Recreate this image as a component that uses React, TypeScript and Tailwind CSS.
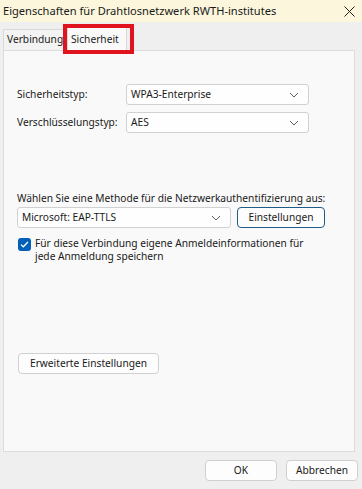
import React from 'react';

const Chevron = () => (
  <svg width="10" height="6" viewBox="0 0 10 6" className="shrink-0">
    <path d="M1 1l4 4 4-4" fill="none" stroke="#606060" strokeWidth="1" />
  </svg>
);

const Combo = ({ value, width }: { value: string; width: string }) => (
  <div
    className={`${width} h-[21px] flex items-center justify-between pl-[4px] pr-[9px] bg-[#fefefe] border border-[#d1d1d1] rounded-[3px]`}
  >
    <span>{value}</span>
    <Chevron />
  </div>
);

const Button = ({ label, className }: { label: string; className: string }) => (
  <div
    className={`${className} h-[21px] flex items-center justify-center bg-[#fdfdfd] border border-[#d0d0d0] rounded-[4px]`}
  >
    {label}
  </div>
);

export default function App() {
  return (
    <div
      className="w-[362px] h-[489px] bg-[#efefef] flex flex-col text-[10.2px] text-[#1a1a1a] overflow-hidden"
      style={{ fontFamily: '"Noto Sans", sans-serif' }}
    >
      {/* title bar */}
      <div className="h-[22px] bg-[#fbf6dc] flex items-center justify-between pl-[3px] pr-[7px] text-[11.1px]">
        <span>Eigenschaften für Drahtlosnetzwerk RWTH-institutes</span>
        <svg width="11" height="11" viewBox="0 0 11 11">
          <path d="M0.5 0.5l10 10M10.5 0.5l-10 10" stroke="#222" strokeWidth="1" />
        </svg>
      </div>

      {/* tabs */}
      <div className="h-[28px] flex items-end pl-[3px]">
        <div className="w-[64px] h-[21px] pl-[3px] flex items-center bg-[#f3f3f3] border border-b-0 border-[#d9d9d9]">
          Verbindung
        </div>
        <div className="relative w-[60px] h-[24px] mb-[-1px] pl-[3px] flex items-center bg-[#f9f9f9] border border-b-0 border-[#d9d9d9] z-10">
          Sicherheit
          <div className="absolute left-[-5px] right-[-8px] top-[-4px] bottom-[-3px] border-[4px] border-[#e0141e]" />
        </div>
      </div>

      {/* panel */}
      <div className="ml-[3px] w-[352px] h-[402px] border border-[#dcdcdc] bg-[#f9f9f9] pl-[13px] pt-[33px]">
        <div className="flex items-center">
          <span className="w-[109px]">Sicherheitstyp:</span>
          <Combo value="WPA3-Enterprise" width="w-[183px]" />
        </div>
        <div className="flex items-center mt-[7px]">
          <span className="w-[109px]">Verschlüsselungstyp:</span>
          <Combo value="AES" width="w-[183px]" />
        </div>

        <div className="mt-[57px] leading-[16px] whitespace-nowrap">
          Wählen Sie eine Methode für die Netzwerkauthentifizierung aus:
        </div>
        <div className="flex items-center gap-[6px] mt-[1px]">
          <Combo value="Microsoft: EAP-TTLS" width="w-[214px]" />
          <div className="w-[88px] h-[21px] flex items-center justify-center bg-[#fdfdfd] border border-[#1f5c86] rounded-[4px]">
            Einstellungen
          </div>
        </div>

        <div className="flex items-start mt-[9px] pl-[1px]">
          <div className="w-[13px] h-[13px] mt-[1px] mr-[4px] rounded-[3px] bg-[#005fb8] flex items-center justify-center shrink-0">
            <svg width="9" height="7" viewBox="0 0 9 7">
              <path d="M1 3.6l2.3 2.2L8 1" fill="none" stroke="#fff" strokeWidth="1.3" />
            </svg>
          </div>
          <div className="leading-[13px]">
            Für diese Verbindung eigene Anmeldeinformationen für
            <br />
            jede Anmeldung speichern
          </div>
        </div>

        <Button label="Erweiterte Einstellungen" className="w-[141px] mt-[90px] ml-[1px]" />
      </div>

      {/* footer */}
      <div className="flex justify-end gap-[9px] pt-[8px] pr-[4px]">
        <Button label="OK" className="w-[72px]" />
        <Button label="Abbrechen" className="w-[72px]" />
      </div>
    </div>
  );
}
